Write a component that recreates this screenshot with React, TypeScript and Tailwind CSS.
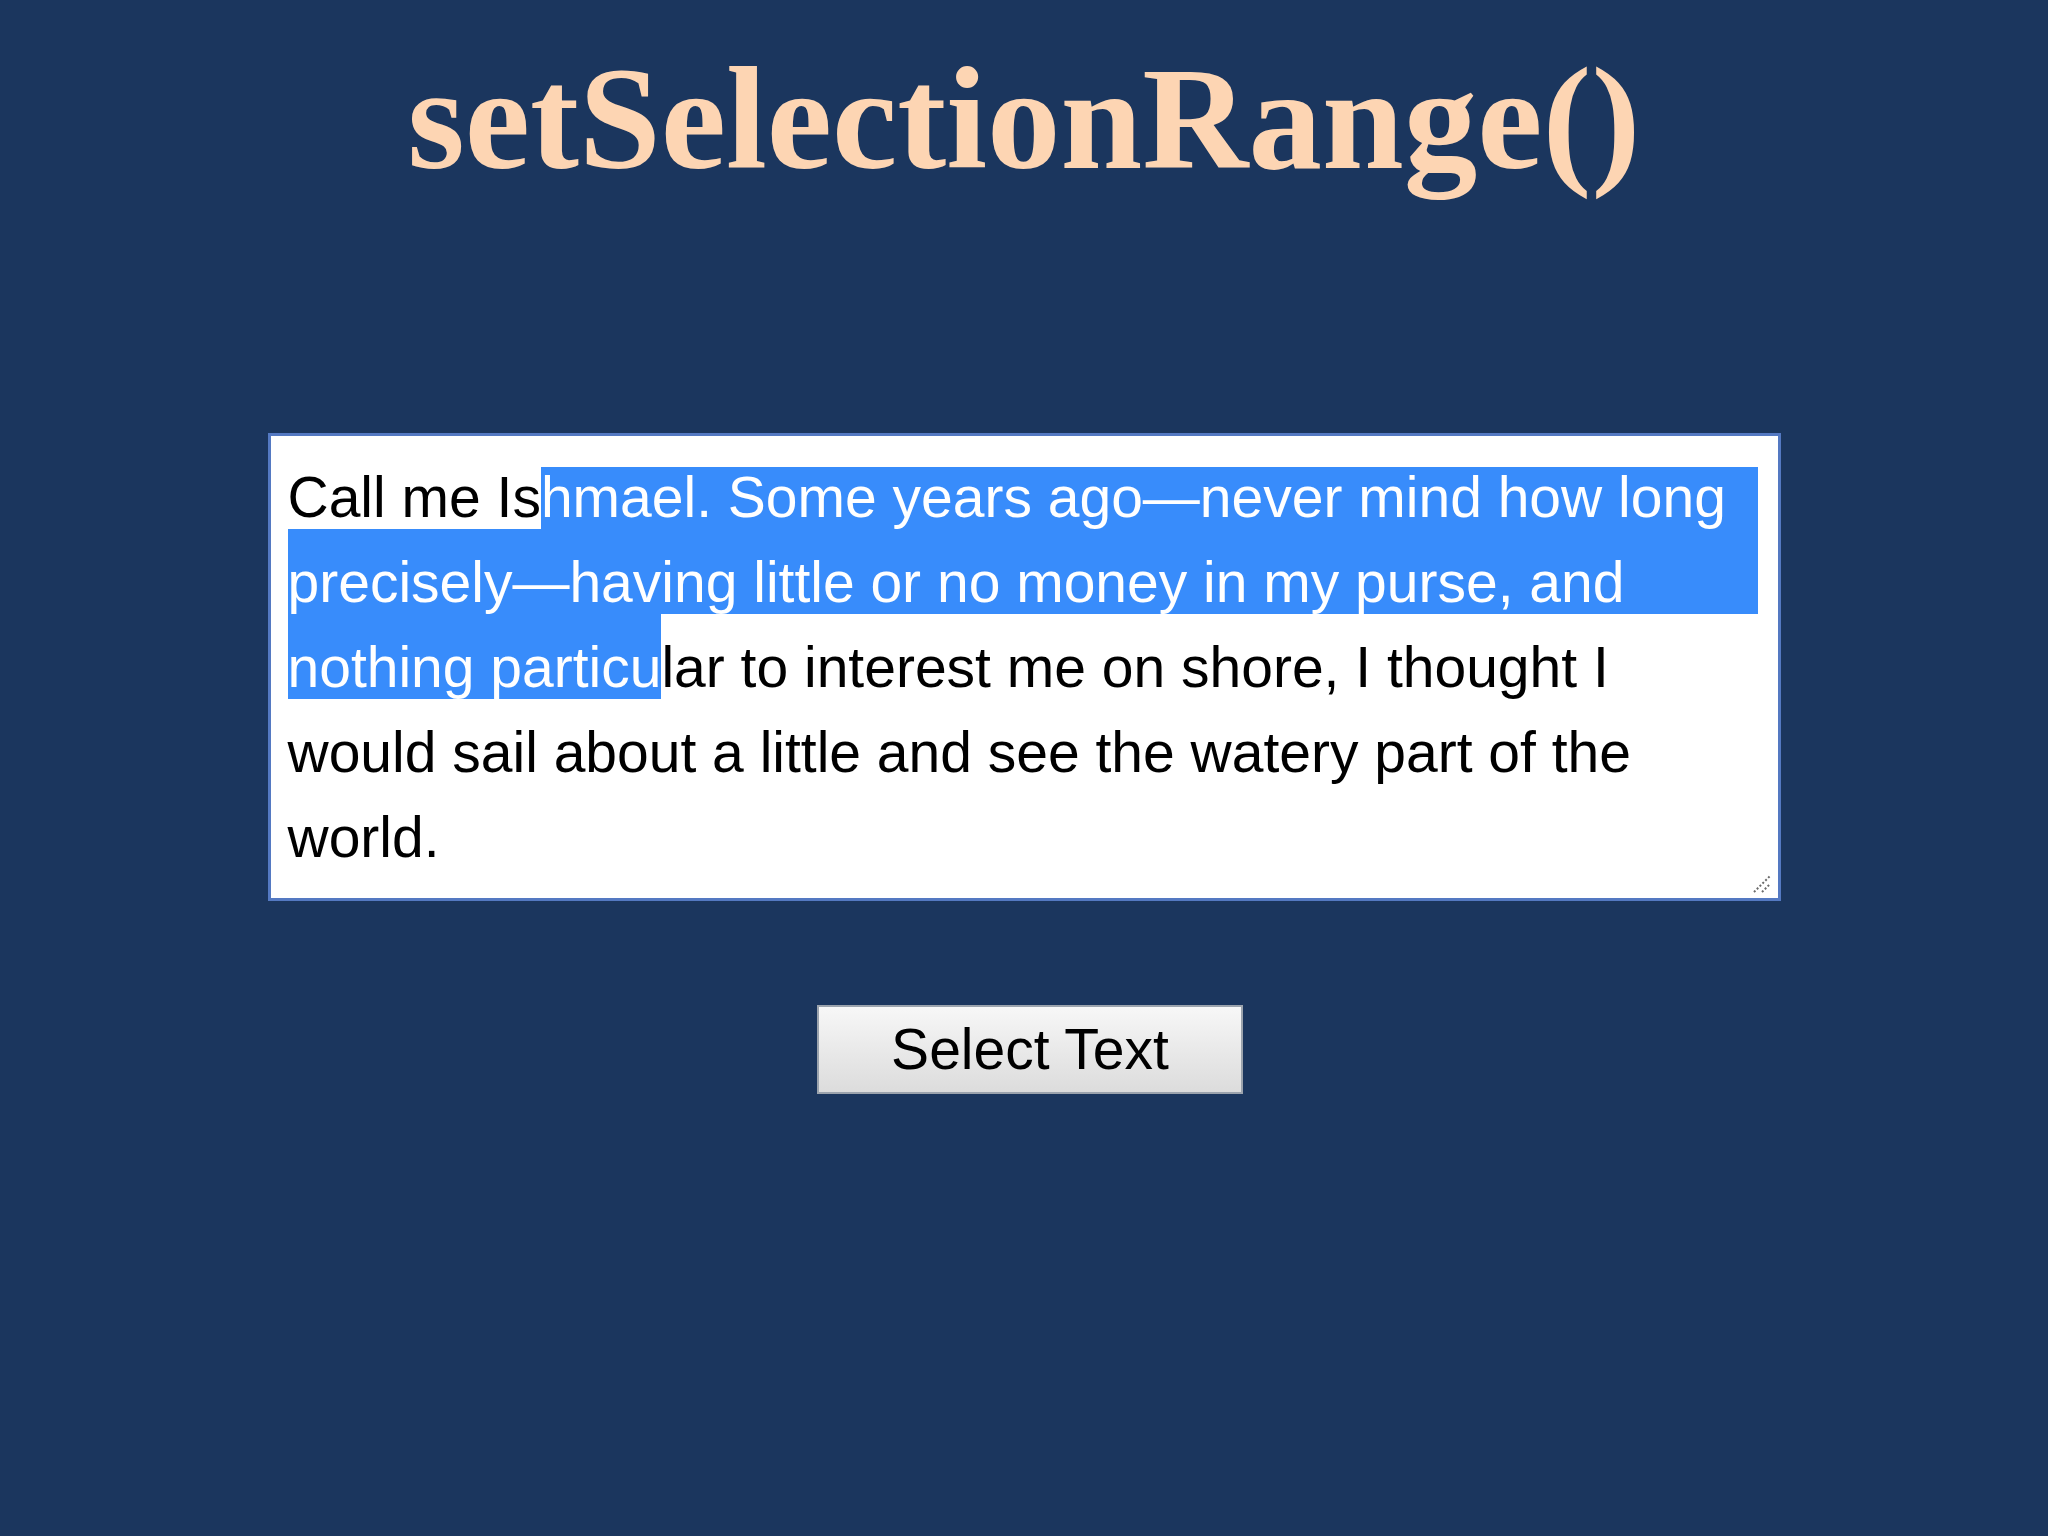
const sans = "font-['Liberation_Sans',Arial,sans-serif]";

function Row({ children }: { children: React.ReactNode }) {
  return <div className="flex h-[85px]">{children}</div>;
}

function Seg({ text, sel, grow, top }: { text: string; sel?: boolean; grow?: boolean; top?: boolean }) {
  return (
    <span
      className={
        "flex items-end whitespace-pre pb-[3px] leading-[57px] " +
        (sel ? "bg-[#388cfb] text-white " : "text-black ") +
        (grow ? "flex-1 " : "") +
        (top ? "mt-[23px]" : "")
      }
    >
      {text}
    </span>
  );
}

function ResizeGrip() {
  return (
    <svg className="absolute bottom-[4px] right-[6px]" width="20" height="20" viewBox="0 0 20 20">
      <path d="M2 18 L18 2" stroke="#6b6b6b" strokeWidth="2" strokeDasharray="2 2" />
      <path d="M10 18 L18 10" stroke="#6b6b6b" strokeWidth="2" strokeDasharray="2 2" />
    </svg>
  );
}

export default function App() {
  return (
    <div className="min-h-screen w-full bg-[#1b365e] flex flex-col items-center">
      <h1 className="pt-[45px] text-[147px] leading-none font-bold text-[#fdd5b3] font-['Liberation_Serif','Times_New_Roman',serif]">
        setSelectionRange()
      </h1>

      <div
        className={
          "relative mt-[241px] w-[1513px] h-[468px] bg-white border-[3px] border-[#5479c2] pl-[17px] pr-[20px] pt-[8px] text-[57px] " +
          sans
        }
      >
        <Row>
          <Seg text="Call me Is" />
          <Seg text="hmael. Some years ago—never mind how long" sel grow top />
        </Row>
        <Row>
          <Seg text="precisely—having little or no money in my purse, and" sel grow />
        </Row>
        <Row>
          <Seg text="nothing particu" sel />
          <Seg text="lar to interest me on shore, I thought I" />
        </Row>
        <Row>
          <Seg text="would sail about a little and see the watery part of the" />
        </Row>
        <Row>
          <Seg text="world." />
        </Row>
        <ResizeGrip />
      </div>

      <button
        className={
          "mt-[104px] ml-[12px] w-[426px] h-[89px] border-2 border-[#9ba3ad] bg-gradient-to-b from-[#f7f7f7] to-[#dcdcdc] text-black text-[57px] leading-none " +
          sans
        }
      >
        Select Text
      </button>
    </div>
  );
}
